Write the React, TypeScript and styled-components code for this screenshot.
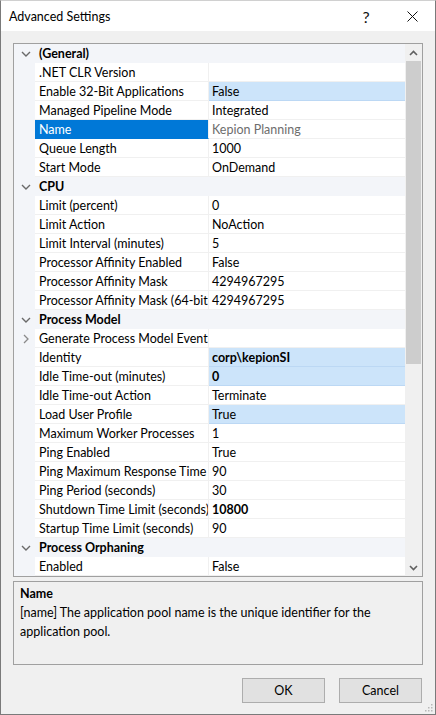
import React from "react";
import styled, { createGlobalStyle, css } from "styled-components";

const GlobalStyle = createGlobalStyle`
  html, body {
    margin: 0;
    padding: 0;
    background: #ffffff;
  }
  * {
    box-sizing: border-box;
  }
`;

const FONT = `"Lato", "Segoe UI", "Liberation Sans", sans-serif`;

const Window = styled.div`
  width: 436px;
  height: 715px;
  display: flex;
  flex-direction: column;
  border: 1px solid #7a7a7a;
  border-top-color: #d0d0d0;
  background: #f0f0f0;
  font-family: ${FONT};
  font-size: 12.5px;
  color: #000;
  position: relative;
`;

const TitleBar = styled.div`
  height: 30px;
  flex: none;
  display: flex;
  align-items: center;
  background: #fff;
  padding-left: 8px;
`;

const Title = styled.div`
  flex: 1;
  padding-top: 1px;
`;

const TitleButton = styled.div`
  width: 46px;
  height: 30px;
  display: flex;
  align-items: center;
  justify-content: center;
  font-size: 16px;
  color: #111;
`;

const Body = styled.div`
  flex: 1;
  display: flex;
  flex-direction: column;
  padding: 12px 12px 11px 12px;
`;

const GridBox = styled.div`
  height: 534px;
  flex: none;
  border: 1px solid #a0a0a0;
  display: flex;
  background: #fff;
  overflow: hidden;
`;

const Rows = styled.div`
  flex: 1;
  display: flex;
  flex-direction: column;
  min-width: 0;
`;

const Row = styled.div`
  display: grid;
  grid-template-columns: 21px 174px 1fr;
  height: 19px;
  flex: none;
`;

const Margin = styled.div`
  background: #f3f5f9;
  display: flex;
  align-items: center;
  justify-content: center;
  padding-left: 2px;
`;

const CategoryRow = styled(Row)`
  background: #f3f5f9;
`;

const CategoryName = styled.div`
  grid-column: 2 / 4;
  font-weight: bold;
  padding: 2px 0 0 4px;
  line-height: 16px;
  white-space: nowrap;
`;

const NameCell = styled.div<{ $selected?: boolean }>`
  padding: 2px 0 0 4px;
  line-height: 16px;
  white-space: nowrap;
  overflow: hidden;
  border-bottom: 1px solid #f0f0f0;
  border-right: 1px solid #f0f0f0;
  ${(p) =>
    p.$selected &&
    css`
      background: #0078d7;
      color: #fff;
      border-bottom-color: #0078d7;
    `}
`;

const ValueCell = styled.div<{ $hl?: boolean; $bold?: boolean; $readOnly?: boolean }>`
  padding: 2px 0 0 3px;
  line-height: 16px;
  white-space: nowrap;
  overflow: hidden;
  border-bottom: 1px solid #f0f0f0;
  font-weight: ${(p) => (p.$bold ? "bold" : "normal")};
  color: ${(p) => (p.$readOnly ? "#6d6d6d" : "#000")};
  ${(p) =>
    p.$hl &&
    css`
      background: #cce4fa;
      border-bottom-color: #bcd8f4;
    `}
`;

const ScrollBar = styled.div`
  width: 17px;
  flex: none;
  background: #f0f0f0;
  display: flex;
  flex-direction: column;
`;

const ScrollArrow = styled.div`
  height: 17px;
  flex: none;
  display: flex;
  align-items: center;
  justify-content: center;
`;

const ScrollTrack = styled.div`
  flex: 1;
  display: flex;
  flex-direction: column;
  padding: 0 1px;
`;

const Thumb = styled.div`
  height: 303px;
  background: #cdcdcd;
`;

const Description = styled.div`
  margin-top: 4px;
  height: 84px;
  flex: none;
  border: 1px solid #a0a0a0;
  padding: 2px 6px;
  line-height: 19px;
`;

const DescTitle = styled.div`
  font-weight: bold;
`;

const Footer = styled.div`
  margin-top: 13px;
  display: flex;
  justify-content: flex-end;
  gap: 14px;
  padding-right: 1px;
`;

const Button = styled.button`
  width: 83px;
  height: 25px;
  background: #e1e1e1;
  border: 1px solid #adadad;
  font-family: ${FONT};
  font-size: 12.5px;
  color: #000;
  padding: 0;
`;

const Grip = styled.svg`
  position: absolute;
  right: 2px;
  bottom: 2px;
`;

type Prop = {
  name: string;
  value: string;
  hl?: boolean;
  bold?: boolean;
  selected?: boolean;
  readOnly?: boolean;
  expandable?: boolean;
};

const sections: { title: string; rows: Prop[] }[] = [
  {
    title: "(General)",
    rows: [
      { name: ".NET CLR Version", value: "" },
      { name: "Enable 32-Bit Applications", value: "False", hl: true },
      { name: "Managed Pipeline Mode", value: "Integrated" },
      { name: "Name", value: "Kepion Planning", selected: true, readOnly: true },
      { name: "Queue Length", value: "1000" },
      { name: "Start Mode", value: "OnDemand" },
    ],
  },
  {
    title: "CPU",
    rows: [
      { name: "Limit (percent)", value: "0" },
      { name: "Limit Action", value: "NoAction" },
      { name: "Limit Interval (minutes)", value: "5" },
      { name: "Processor Affinity Enabled", value: "False" },
      { name: "Processor Affinity Mask", value: "4294967295" },
      { name: "Processor Affinity Mask (64-bit option)", value: "4294967295" },
    ],
  },
  {
    title: "Process Model",
    rows: [
      { name: "Generate Process Model Event Log Entry", value: "", expandable: true },
      { name: "Identity", value: "corp\\kepionSI", hl: true, bold: true },
      { name: "Idle Time-out (minutes)", value: "0", hl: true, bold: true },
      { name: "Idle Time-out Action", value: "Terminate" },
      { name: "Load User Profile", value: "True", hl: true },
      { name: "Maximum Worker Processes", value: "1" },
      { name: "Ping Enabled", value: "True" },
      { name: "Ping Maximum Response Time (seconds)", value: "90" },
      { name: "Ping Period (seconds)", value: "30" },
      { name: "Shutdown Time Limit (seconds)", value: "10800", bold: true },
      { name: "Startup Time Limit (seconds)", value: "90" },
    ],
  },
  {
    title: "Process Orphaning",
    rows: [{ name: "Enabled", value: "False" }],
  },
];

const ChevronDown = () => (
  <svg width="10" height="6" viewBox="0 0 10 6">
    <path d="M1 1l4 4 4-4" fill="none" stroke="#6a6a6a" strokeWidth="1.4" />
  </svg>
);

const ChevronRight = () => (
  <svg width="6" height="10" viewBox="0 0 6 10">
    <path d="M1 1l4 4-4 4" fill="none" stroke="#8a8a8a" strokeWidth="1.3" />
  </svg>
);

const ArrowUp = () => (
  <svg width="9" height="6" viewBox="0 0 9 6">
    <path d="M1 5l3.5-3.5L8 5" fill="none" stroke="#606060" strokeWidth="1.6" />
  </svg>
);

const ArrowDown = () => (
  <svg width="9" height="6" viewBox="0 0 9 6">
    <path d="M1 1l3.5 3.5L8 1" fill="none" stroke="#606060" strokeWidth="1.6" />
  </svg>
);

const App = () => {
  return (
    <>
      <GlobalStyle />
      <Window>
        <TitleBar>
          <Title>Advanced Settings</Title>
          <TitleButton>?</TitleButton>
          <TitleButton>
            <svg width="11" height="11" viewBox="0 0 11 11">
              <path d="M0.5 0.5l10 10M10.5 0.5l-10 10" stroke="#111" strokeWidth="1" />
            </svg>
          </TitleButton>
        </TitleBar>
        <Body>
          <GridBox>
            <Rows>
              {sections.map((s) => (
                <React.Fragment key={s.title}>
                  <CategoryRow>
                    <Margin>
                      <ChevronDown />
                    </Margin>
                    <CategoryName>{s.title}</CategoryName>
                  </CategoryRow>
                  {s.rows.map((r) => (
                    <Row key={r.name}>
                      <Margin>{r.expandable && <ChevronRight />}</Margin>
                      <NameCell $selected={r.selected}>{r.name}</NameCell>
                      <ValueCell $hl={r.hl} $bold={r.bold} $readOnly={r.readOnly}>
                        {r.value}
                      </ValueCell>
                    </Row>
                  ))}
                </React.Fragment>
              ))}
            </Rows>
            <ScrollBar>
              <ScrollArrow>
                <ArrowUp />
              </ScrollArrow>
              <ScrollTrack>
                <Thumb />
              </ScrollTrack>
              <ScrollArrow>
                <ArrowDown />
              </ScrollArrow>
            </ScrollBar>
          </GridBox>
          <Description>
            <DescTitle>Name</DescTitle>
            <div>
              [name] The application pool name is the unique identifier for the
              <br />
              application pool.
            </div>
          </Description>
          <Footer>
            <Button>OK</Button>
            <Button>Cancel</Button>
          </Footer>
        </Body>
        <Grip width="9" height="9" viewBox="0 0 9 9">
          {[
            [7, 1],
            [7, 4],
            [4, 4],
            [7, 7],
            [4, 7],
            [1, 7],
          ].map(([x, y]) => (
            <rect key={`${x}-${y}`} x={x} y={y} width="1.5" height="1.5" fill="#b8b8b8" />
          ))}
        </Grip>
      </Window>
    </>
  );
};

export default App;
